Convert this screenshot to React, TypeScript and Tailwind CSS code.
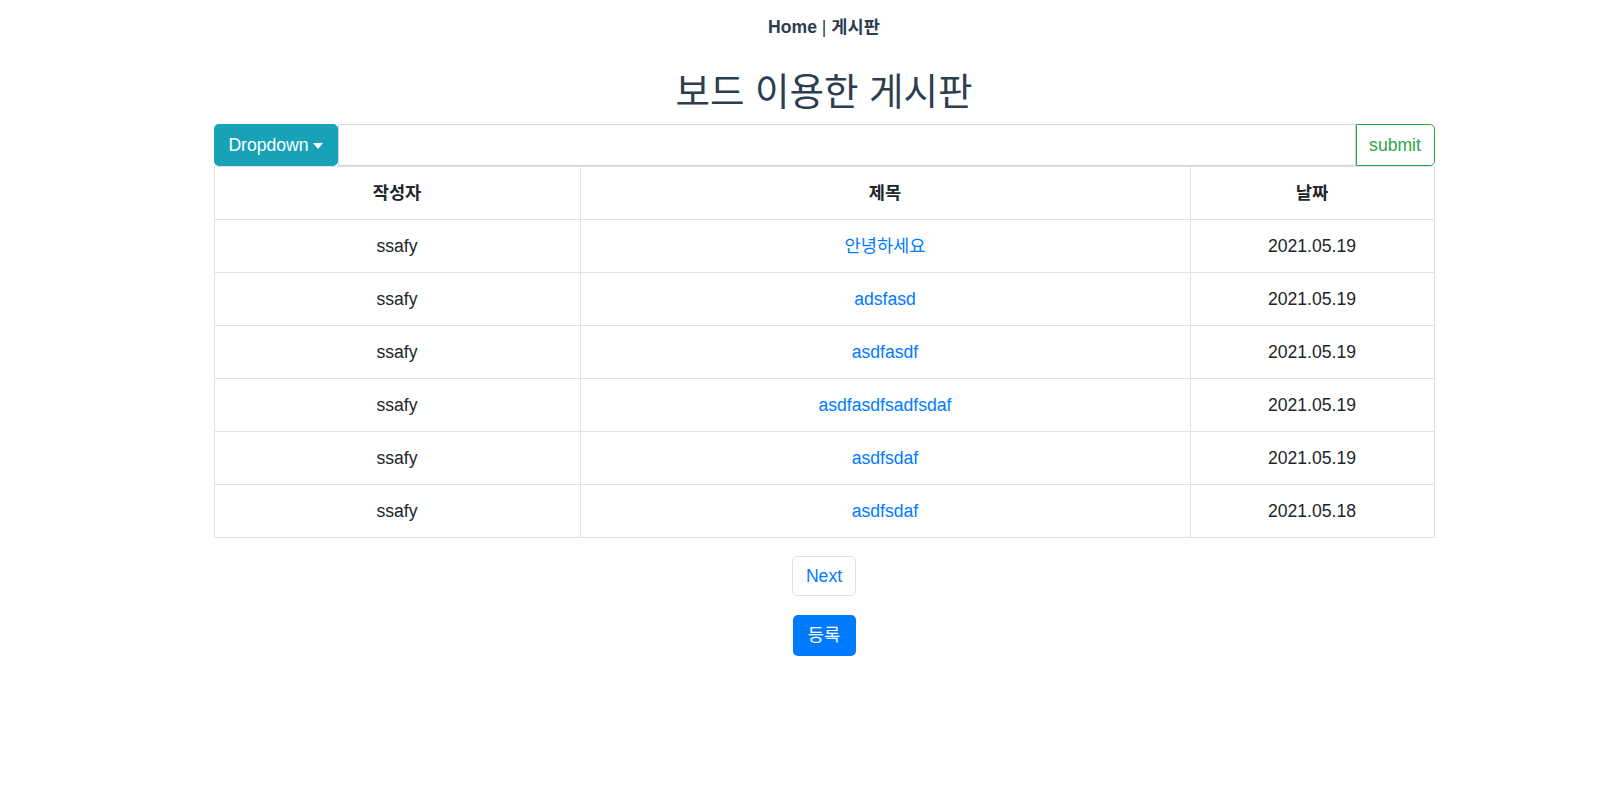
const posts = [
  { id: 1, writer: 'ssafy', title: '안녕하세요', date: '2021.05.19' },
  { id: 2, writer: 'ssafy', title: 'adsfasd', date: '2021.05.19' },
  { id: 3, writer: 'ssafy', title: 'asdfasdf', date: '2021.05.19' },
  { id: 4, writer: 'ssafy', title: 'asdfasdfsadfsdaf', date: '2021.05.19' },
  { id: 5, writer: 'ssafy', title: 'asdfsdaf', date: '2021.05.19' },
  { id: 6, writer: 'ssafy', title: 'asdfsdaf', date: '2021.05.18' },
]

function Nav() {
  return (
    <nav className="pt-[14px] text-center text-[17.6px] leading-[26px] font-bold text-[#2c3e50]">
      <a href="#" className="text-[#2c3e50]">
        Home
      </a>
      <span className="font-normal"> | </span>
      <a href="#" className="text-[#2c3e50]">
        게시판
      </a>
    </nav>
  )
}

function SearchBar() {
  return (
    <div className="flex h-[42px] w-full">
      <button
        type="button"
        className="flex h-full w-[124px] items-center justify-center gap-[4px] rounded-[5px] bg-[#17a2b8] text-[17.6px] text-white"
      >
        Dropdown
        <span className="mt-[2px] h-0 w-0 border-x-[5px] border-t-[6px] border-x-transparent border-t-white" />
      </button>
      <input type="text" className="h-full min-w-0 flex-1 border border-[#ced4da] bg-white px-3 outline-none" />
      <button
        type="button"
        className="h-full w-[79px] rounded-r-[5px] border border-[#28a745] text-[17.6px] text-[#28a745]"
      >
        submit
      </button>
    </div>
  )
}

function BoardTable() {
  return (
    <table className="w-full table-fixed border-collapse text-center text-[17.6px] text-[#212529]">
      <colgroup>
        <col className="w-[30%]" />
        <col className="w-[50%]" />
        <col className="w-[20%]" />
      </colgroup>
      <thead>
        <tr>
          <th className="h-[53px] border border-[#dee2e6] p-0 align-middle font-bold">작성자</th>
          <th className="h-[53px] border border-[#dee2e6] p-0 align-middle font-bold">제목</th>
          <th className="h-[53px] border border-[#dee2e6] p-0 align-middle font-bold">날짜</th>
        </tr>
      </thead>
      <tbody>
        {posts.map((post) => (
          <tr key={post.id}>
            <td className="h-[53px] border border-[#dee2e6] p-0 align-middle">{post.writer}</td>
            <td className="h-[53px] border border-[#dee2e6] p-0 align-middle">
              <a href="#" className="text-[#007bff]">
                {post.title}
              </a>
            </td>
            <td className="h-[53px] border border-[#dee2e6] p-0 align-middle">{post.date}</td>
          </tr>
        ))}
      </tbody>
    </table>
  )
}

export default function App() {
  return (
    <div
      className="min-h-screen w-full bg-white pl-[46px] text-[#2c3e50]"
      style={{ fontFamily: '"Liberation Sans", "Noto Sans CJK KR", Arial, sans-serif' }}
    >
      <Nav />

      <main className="mx-auto flex w-[1221px] flex-col items-center">
        <h2 className="mt-[30px] text-[37.5px] leading-[44px] font-normal text-[#2c3e50]">보드 이용한 게시판</h2>

        <div className="mt-[10px] w-full">
          <SearchBar />
          <BoardTable />
        </div>

        <button
          type="button"
          className="mt-[18px] flex h-[40px] w-[64px] items-center justify-center rounded-[5px] border border-[#dee2e6] bg-white text-[17.6px] text-[#007bff]"
        >
          Next
        </button>

        <button
          type="button"
          className="mt-[19px] flex h-[41px] w-[63px] items-center justify-center rounded-[5px] bg-[#007bff] text-[17.6px] text-white"
        >
          등록
        </button>
      </main>
    </div>
  )
}
